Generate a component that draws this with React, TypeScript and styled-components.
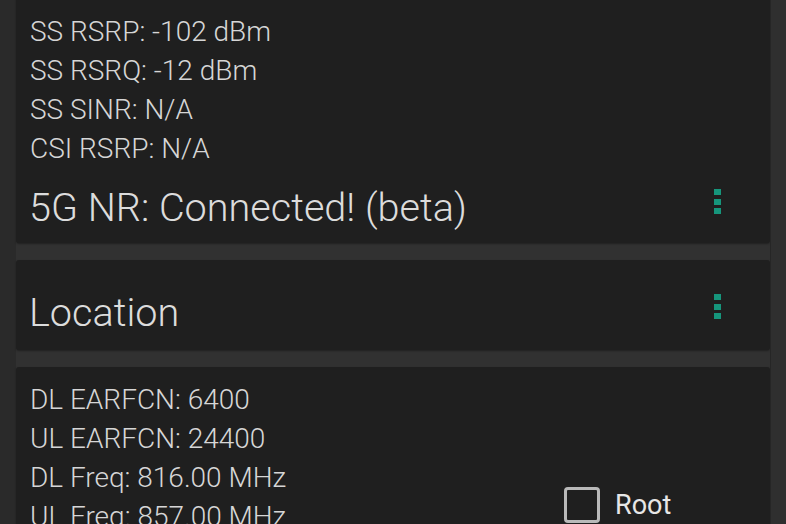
import React from 'react';
import styled, { createGlobalStyle } from 'styled-components';

const GlobalStyle = createGlobalStyle`
	html, body {
		margin: 0;
		padding: 0;
		background: #2a2a2a;
		overflow: hidden;
	}
	body {
		font-family: Roboto, 'Noto Sans', sans-serif;
	}
`;

const Screen = styled.div`
	width: 786px;
	height: 524px;
	display: grid;
	grid-template-columns: 16px 754px 16px;
	background: #2a2a2a;
	overflow: hidden;
`;

const RightStrip = styled.div`
	background: #2f2f2f;
	border-left: 1px solid #262626;
`;

const CardList = styled.div`
	display: flex;
	flex-direction: column;
	gap: 17px;
	background: #313131;
	margin-top: -20px;
`;

const Card = styled.div<{ pad: string }>`
	background: #1f1f1f;
	border-radius: 3px;
	padding: ${(p) => p.pad};
	box-shadow: 0 1px 2px rgba(0, 0, 0, 0.35);
`;

const InfoLine = styled.div`
	font-family: 'Roboto Light', Roboto, sans-serif;
	font-size: 28px;
	font-weight: 300;
	line-height: 39px;
	color: #d6d6d6;
	white-space: nowrap;
`;

const TitleRow = styled.div<{ top: number }>`
	display: flex;
	align-items: center;
	justify-content: space-between;
	padding-right: 49px;
	margin-top: ${(p) => p.top}px;
`;

const Title = styled.div`
	font-family: 'Roboto Light', Roboto, sans-serif;
	font-size: 39.6px;
	font-weight: 300;
	line-height: 48px;
	color: #dcdcdc;
	white-space: nowrap;
	margin-left: -1px;
`;

const MenuButton = styled.div`
	display: flex;
	flex-direction: column;
	gap: 3.5px;
	margin-top: -13px;
`;

const Dot = styled.span`
	width: 7px;
	height: 6px;
	background: #16967c;
`;

const DetailRow = styled.div`
	display: flex;
	align-items: flex-start;
`;

const DetailColumn = styled.div`
	width: 534px;
	display: flex;
	flex-direction: column;
`;

const RootOption = styled.label`
	display: flex;
	align-items: center;
	gap: 15px;
	margin-top: 107px;
`;

const CheckBox = styled.span`
	box-sizing: border-box;
	width: 36px;
	height: 36px;
	border: 3px solid #b9b9b9;
	border-radius: 4px;
	background: #1f1f1f;
`;

const RootLabel = styled.span`
	font-size: 27px;
	font-weight: 400;
	color: #e6e6e6;
	line-height: 36px;
`;

const Menu = () => (
	<MenuButton>
		<Dot />
		<Dot />
		<Dot />
	</MenuButton>
);

export default function App() {
	const nrLines = ['SS RSRP: -102 dBm', 'SS RSRQ: -12 dBm', 'SS SINR: N/A', 'CSI RSRP: N/A'];
	const lteLines = ['DL EARFCN: 6400', 'UL EARFCN: 24400', 'DL Freq: 816.00 MHz', 'UL Freq: 857.00 MHz'];

	return (
		<>
			<GlobalStyle />
			<Screen>
				<div />
				<CardList>
					<Card pad='32px 0 11px 14px'>
						{nrLines.map((l) => (
							<InfoLine key={l}>{l}</InfoLine>
						))}
						<TitleRow top={16}>
							<Title>5G NR: Connected! (beta)</Title>
							<Menu />
						</TitleRow>
					</Card>
					<Card pad='29px 0 13px 14px'>
						<TitleRow top={0}>
							<Title>Location</Title>
							<Menu />
						</TitleRow>
					</Card>
					<Card pad='13px 0 20px 14px'>
						<DetailRow>
							<DetailColumn>
								{lteLines.map((l) => (
									<InfoLine key={l}>{l}</InfoLine>
								))}
							</DetailColumn>
							<RootOption>
								<CheckBox />
								<RootLabel>Root</RootLabel>
							</RootOption>
						</DetailRow>
					</Card>
				</CardList>
				<RightStrip />
			</Screen>
		</>
	);
}
